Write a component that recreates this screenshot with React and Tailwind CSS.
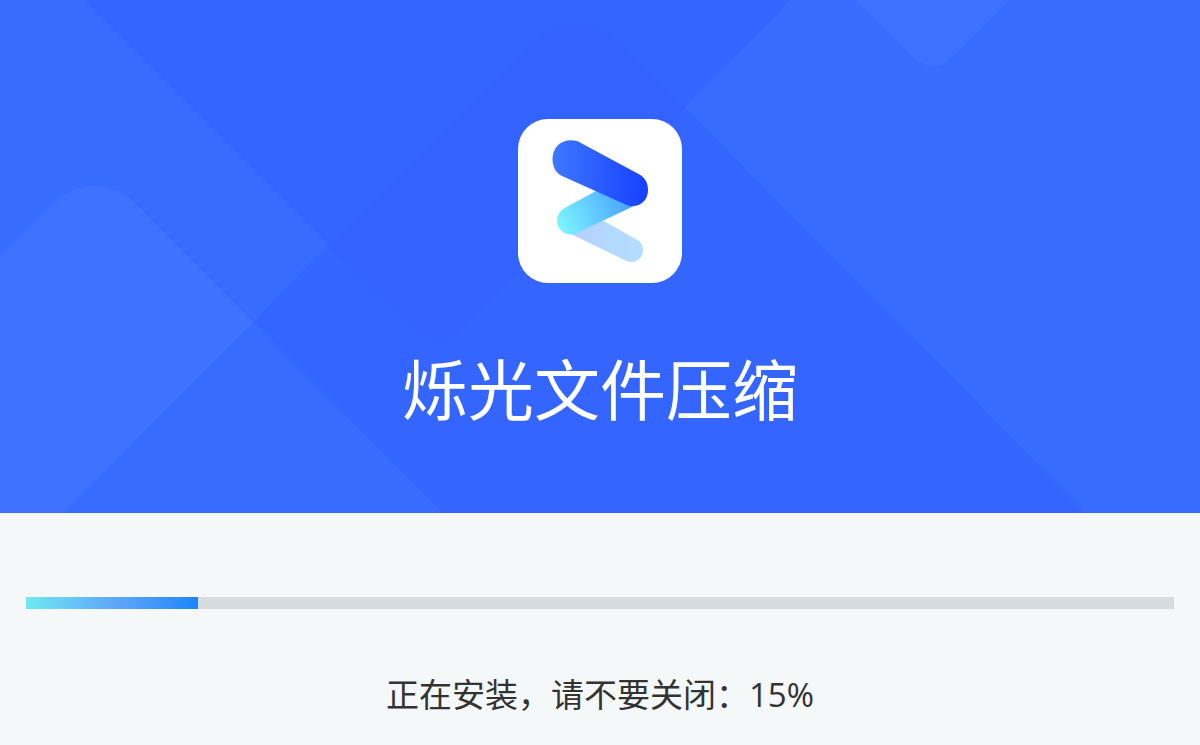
const PERCENT = 15

function AppLogo() {
  return (
    <svg viewBox="0 0 164 164" className="size-41" role="img" aria-label="烁光文件压缩">
      <defs>
        <linearGradient id="logo-top" x1="0" x2="1" y1="0" y2="0">
          <stop offset="0" stopColor="#3f78ff" />
          <stop offset="1" stopColor="#1640ff" />
        </linearGradient>
        <linearGradient id="logo-middle" gradientUnits="userSpaceOnUse" x1="42" y1="108" x2="114" y2="76">
          <stop offset="0" stopColor="#7cf4ff" />
          <stop offset="1" stopColor="#459dff" />
        </linearGradient>
        <linearGradient id="logo-bottom" x1="0" x2="1" y1="0" y2="0">
          <stop offset="0" stopColor="#b4cffd" />
          <stop offset="0.5" stopColor="#b4d8ff" />
          <stop offset="1" stopColor="#b3deff" />
        </linearGradient>
      </defs>
      <rect width="164" height="164" rx="30" fill="#fff" />
      <path
        d="M53 115 L84 101 L118.500 120.500 C122.500 122.500 125 126 125 131 C125 138 120 143 113.500 143 C111 143 109.500 142.600 107.500 141.600 Z"
        fill="url(#logo-bottom)"
      />
      <path
        d="M78 72 L47.500 88.500 C42 91.500 39 96 39 102 C39 109.500 45.500 115.500 53 115.500 C55.500 115.500 58 114.500 60 113.500 L116 87 Z"
        fill="url(#logo-middle)"
      />
      <path
        d="M62 23.500 L121.500 55.500 C127 58.500 130 64 130 71 C130 81 123 87 115 87 C112 87 110 86.500 107.500 85.400 L44 57 C38 54 34.500 48 34.500 40 C34.500 29 42 21.300 53 21.300 C57 21.300 59.500 22 62 23.500 Z"
        fill="url(#logo-top)"
      />
    </svg>
  )
}

function BannerPattern() {
  return (
    <svg
      viewBox="0 0 1200 513"
      preserveAspectRatio="xMidYMid slice"
      className="absolute inset-0 size-full"
      aria-hidden="true"
    >
      <rect width="1200" height="513" fill="#3466ff" />
      {/* left side */}
      <path d="M0 0 H83 L328 245 L253 322 L0 513 Z" fill="#386cff" />
      <path d="M253 322 L63 513 H443 Z" fill="#386cff" />
      <path d="M0 258 L55 203 Q73 186 95 186 Q117 186 135 203 L253 322 L63 513 H0 Z" fill="#3f73ff" />
      {/* center */}
      <path
        d="M328 245 L527 46 Q550 24 575 24 Q600 24 620 42 L685 107 L460 330 Q438 352 415 330 Z"
        fill="#3362ff"
      />
      {/* right side */}
      <path d="M790 0 H1200 V513 H1086 L685 107 Z" fill="#386cff" />
      <path d="M855 0 H1010 L951 59 Q934 74 916 59 Z" fill="#3e71ff" />
    </svg>
  )
}

export default function App() {
  return (
    <main className="flex min-h-screen flex-col bg-[#f4f8f9] font-['Open_Sans','Noto_Sans_CJK_SC',sans-serif]">
      <header className="relative flex flex-col items-center gap-14 bg-[#3466ff] pt-[119px] pb-[74px]">
        <BannerPattern />
        <div className="relative">
          <AppLogo />
        </div>
        <h1 className="relative text-[66px] leading-[100px] font-normal text-white">烁光文件压缩</h1>
      </header>

      <section className="flex flex-col items-center gap-16 px-[26px] pt-[84px]">
        <div
          role="progressbar"
          aria-labelledby="install-status"
          aria-valuenow={PERCENT}
          aria-valuemin={0}
          aria-valuemax={100}
          className="h-3 w-full bg-[#d6dbdf]"
        >
          <div
            className="h-full bg-linear-to-r from-[#70e9f0] via-[#60a8f8] to-[#1a85fb]"
            style={{ width: `${PERCENT}%` }}
          />
        </div>
        <p id="install-status" className="text-[33px] leading-11 text-[#333333]">
          正在安装，请不要关闭：{PERCENT}%
        </p>
      </section>
    </main>
  )
}
